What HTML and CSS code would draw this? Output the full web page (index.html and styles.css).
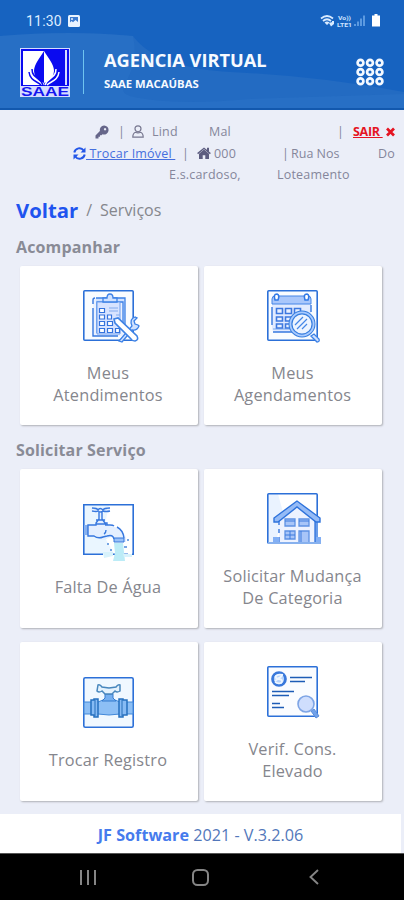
FILE: index.html
```html
<!DOCTYPE html>
<html lang="pt-BR">
<head>
<meta charset="utf-8">
<meta name="viewport" content="width=device-width, initial-scale=1">
<title>Agencia Virtual</title>
<link rel="stylesheet" href="styles.css">
</head>
<body>
<div class="screen">
  <header class="header">
    <svg class="waves" viewBox="0 0 404 108" preserveAspectRatio="none">
      <path d="M0 36Q70 30 133 36C150 60 190 70 230 72Q320 76 404 92V108H0z" fill="#236bc2"/>
      <path d="M0 36Q70 30 133 36C142 78 110 90 130 96Q170 106 250 99L404 94V108H0z" fill="#2a72c6" opacity=".6"/>
    </svg>
    <div class="status">
      <span class="clock">11:30</span>
      <svg class="photo" width="12" height="12" viewBox="0 0 12 12"><rect width="12" height="12" rx="1.5" fill="#e9f3ff"/><path d="M2 2h8v5L7.500 5 5 7.300 3.500 6 2 7.500z" fill="#3c7bd0"/><circle cx="4" cy="4" r="1" fill="#e9f3ff"/></svg>
      <svg class="signals" width="61" height="14" viewBox="0 0 61 14">
        <g fill="none" stroke="#d9ebff" stroke-width="1.700"><path d="M1 4.500q6-5 12 0M3 7q4-3.500 8 0"/></g>
        <path d="M4.500 8.500q2.500-2 5 0L7 11zM9 9l3-1v2h2l-3 2.500zM12 7h2v3h-2z" fill="#d9ebff"/>
        <text x="18" y="6" textLength="13" lengthAdjust="spacingAndGlyphs" class="volte">Vo))</text>
        <text x="17" y="13" textLength="15" lengthAdjust="spacingAndGlyphs" class="volte">LTE1</text>
        <path d="M34 10h2v2h-2zM37 7.500h2V12h-2zM40 4.500h2V12h-2zM43 1.500h2V12h-2z" fill="#5c9ae0"/>
        <path d="M54.500 0h3v1.500H60V12.500h-8V1.500h2.500z" fill="#fff"/>
      </svg>
    </div>
    <div class="brand">
      <svg class="logo" width="50" height="49" viewBox="0 0 50 49">
        <rect width="50" height="49" fill="#d5dcff"/>
        <rect x="1" y="1" width="48" height="37" fill="#0a0af0"/>
        <rect x="3" y="3" width="21" height="34" fill="#fff"/>
        <rect x="45" y="2" width="2" height="35" fill="#d5dcff"/>
        <path d="M24 3C20 10 14 16 14 23q0 8 10 12z" fill="#0a0af0"/>
        <path d="M24 3c4 7 10 13 10 20q0 8-10 12z" fill="#fff"/>
        <path d="M12 21c0 10 9 8 11 16M9 24c1 9 8 9 12 13" fill="none" stroke="#0a0af0" stroke-width="1.500"/>
        <path d="M36 21c0 10-9 8-11 16M39 24c-1 9-8 9-12 13" fill="none" stroke="#fff" stroke-width="1.500"/>
        <text x="1" y="48" textLength="48" lengthAdjust="spacingAndGlyphs" class="logo-text">SAAE</text>
      </svg>
      <div class="divider"></div>
      <div class="titles"><h1>AGENCIA VIRTUAL</h1><p>SAAE MACAÚBAS</p></div>
      <svg class="menu" width="28" height="28" viewBox="0 0 28 28" fill="none" stroke="#f4f9ff" stroke-width="2.700">
        <circle cx="4.500" cy="4.700" r="2.900"/><circle cx="14" cy="4.700" r="2.900"/><circle cx="23.500" cy="4.700" r="2.900"/>
        <circle cx="4.500" cy="14" r="2.900"/><circle cx="14" cy="14" r="2.900"/><circle cx="23.500" cy="14" r="2.900"/>
        <circle cx="4.500" cy="23.300" r="2.900"/><circle cx="14" cy="23.300" r="2.900"/><circle cx="23.500" cy="23.300" r="2.900"/>
      </svg>
    </div>
  </header>

  <section class="account">
    <div class="row row-user">
      <svg width="14" height="14" viewBox="0 0 14 14"><path fill="#66668a" fill-rule="evenodd" d="M9 .500a4.500 4.500 0 1 1-1.500 8.700L6.500 10.300H5v1.500H3.500v1.700H.500v-3L4.900 6A4.500 4.500 0 0 1 9 .500zM10 3a1.200 1.200 0 1 0 .1 0z"/></svg>
      <span class="bar">|</span>
      <svg width="12" height="13" viewBox="0 0 12 13" fill="none" stroke="#77778f" stroke-width="1.200"><circle cx="6" cy="3.800" r="3"/><path d="M3.500 7.300C1.500 8 .800 9 .800 12.200h10.400c0-3.200-.700-4.200-2.700-4.900q-2.500 1.300-5 0z"/></svg>
      <span>Lind</span><span>Mal</span><span class="bar">|</span>
      <a class="logout">SAIR&nbsp;</a>
      <svg width="11" height="10" viewBox="0 0 11 10"><path d="M2 1.500l7 7M9 1.500l-7 7" stroke="#e51422" stroke-width="2.700"/></svg>
    </div>
    <div class="row row-home">
      <svg width="13" height="13" viewBox="0 0 13 13" fill="none" stroke="#2457e8" stroke-width="2"><path d="M1.300 5.500A5.200 5.200 0 0 1 10.700 3.500M11.700 7.500A5.200 5.200 0 0 1 2.300 9.500"/><path d="M12.500.500v5h-5zM.500 12.500v-5h5z" fill="#2457e8" stroke="none"/></svg>
      <a class="swap">&nbsp;Trocar Imóvel&nbsp;</a><span class="bar">|</span>
      <svg width="14" height="12" viewBox="0 0 14 12"><path d="M7 2.600L2 6.800V12h3.700V8.300h2.600V12H12V6.800z" fill="#5d5d80"/><path d="M.600 6.600L7 1.300l6.400 5.300" fill="none" stroke="#5d5d80" stroke-width="1.400"/><path d="M10 .800h2v4h-2z" fill="#5d5d80"/></svg>
      <span>000</span><span class="bar">|</span><span class="street">Rua Nos</span><span class="street-end">Do</span>
    </div>
    <div class="row row-address"><span>E.s.cardoso,</span><span>Loteamento</span></div>
  </section>

  <main class="content">
    <nav class="crumb"><a>Voltar</a><span class="slash">/</span><span>Serviços</span></nav>
    <h2>Acompanhar</h2>
    <div class="cards">
      <article class="card">
        <svg class="icon" viewBox="0 0 51 51">
          <rect x=".800" y=".800" width="49.400" height="49.400" rx="1" class="frame"/>
          <path d="M12 8h30v38H10V10" class="soft"/><path d="M10 18v28h25M10 14v-4q0-2 2-2" class="line"/>
          <path d="M13 8h29v31H40V12H14v31" class="pale"/><path d="M14 12h23v32H14z" fill="#d7e3ff" stroke="#6d9eee"/>
          <path d="M20 12V8h4q0-4 3-4t3 4h4v4z" class="pale"/>
          <path d="M16.500 18.500h5v4h-5zM16.500 25h5v4h-5zM24.500 25h4v4h-4zM16.500 31.500h5v4h-5zM24.500 31.500h5v4h-5zM16.500 38.500h5v4h-5zM24.500 38.500h5v4h-5zM32.500 38.500h4v4h-4z" fill="#fff" stroke="#3473dd" stroke-width="1.200"/>
          <path d="M26 18h9M26 21h9M33 25h4" stroke="#83abed"/>
          <path d="M36 51l13-15q-3-7 3-9l2 1-3 3 1 3 3 1 1 1q-2 5-7 4L39 52z" class="pale"/>
          <path d="M31 29l4-1 19 18q2 4-2 5-3 0-4-2L32 33z" fill="#fff" stroke="#3d82e5" stroke-width="1.600"/>
        </svg>
        <p>Meus<br>Atendimentos</p>
      </article>
      <article class="card">
        <svg class="icon" viewBox="0 0 51 51">
          <rect x=".800" y=".800" width="49.400" height="49.400" rx="1" class="frame"/>
          <path d="M5 9q0-3 3-3h33q3 0 3 3v33H9q-4 0-4-4z" fill="#e2ebff"/>
          <path d="M5 14V9q0-3 3-3h33q3 0 3 3v5z" fill="#a9c7fb" stroke="#4585e6"/>
          <path d="M5 17v18M6 42h19M44 15v7" class="line"/><path d="M6 39h20" stroke="#77a7f0"/>
          <path d="M8 10q-2-6 2-6 3 1 1 6zM38 10q-2-6 2-6 3 1 1 6z" fill="#fff" stroke="#3179e5" stroke-width="1.600"/>
          <path d="M9.500 18.500h6v5h-6zM18.500 18.500h6v5h-6zM27.500 18.500h6v5h-6zM9.500 27h6v4h-6zM18.500 27h6v4h-6zM9.500 34h6v4h-6zM18.500 34h6v4h-6z" fill="#e8f0ff" stroke="#3d78df" stroke-width="1.600"/>
          <path d="M44 46l3-2 5 5q1 3-2 3z" class="pale"/>
          <circle cx="35" cy="34" r="11.500" fill="#edf4ff" stroke="#397fdf" stroke-width="4"/><circle cx="35" cy="34" r="11.600" fill="none" stroke="#a9cbff" stroke-width="1.800"/>
          <path d="M28 35l8-8M30 39l10-10M35 39l5-5" stroke="#4486e7" stroke-width="1.200"/>
        </svg>
        <p>Meus<br>Agendamentos</p>
      </article>
    </div>
    <h2 class="second">Solicitar Serviço</h2>
    <div class="cards">
      <article class="card">
        <svg class="icon" viewBox="0 0 51 51">
          <path d="M1 1h25L20 30 31 50H1z" fill="#eaf6ff"/>
          <path d="M20 50.200H.800V.800H50.200V50.200H49M32 50.200h-4M45 50.200h-5" class="frame-line"/>
          <path d="M16 16h3v-3h-3v-5q-4-1-8-1V4q5-1 9 0 9-1 10-1v4q-4 0-7 1v5h-2l4 6h2l2 3q14 1 17 12v4h-9q-1-7-9-4-4 4-10 0-4-3-12-1V21h10z" fill="#e4efff"/>
          <path d="M1 21h4v10H1z" fill="#87b1ef"/>
          <path d="M9 4q5 0 6 2 2-3 5 0 1-2 7-2M9 7q5 1 6 0 3 2 5 0 3 1 7 0M16 8v7l-3 4v2H5v11h6q4 3 9 1l4-1M19 8v7l3 4h2v2M13 16h9M13 20h10M5 21v11M22 21h5q3 0 4 1M34 23q6 3 7 11M21 30q2-1 2-4M24 32q6-2 7 3" class="line"/>
          <path d="M31 34h10v4H31z" fill="#99c1f8" stroke="#3577db"/>
          <path d="M31 39h9l2 18H30l2-8z" fill="#bcecf7"/>
          <path d="M20 48h10v4l-9 2zM40 50h9v3h-8z" fill="#d8f2fb"/>
          <path d="M24 40h2M44 36h2M41 43h3M27 46h2" stroke="#4d89da" stroke-width="1.500"/>
        </svg>
        <p>Falta De Água</p>
      </article>
      <article class="card">
        <svg class="icon" viewBox="0 0 51 51">
          <path d="M1 1h10l6 22L8 50H1z" fill="#eaf3ff"/>
          <rect x=".800" y=".800" width="49.400" height="49.400" rx="1" class="frame-line"/>
          <path d="M12 25l18-14 17 14v25H12z" fill="#edf2ff"/><path d="M48 27h3v23h-3z" fill="#699ce9"/>
          <path d="M12 26v6M12 36v4M12 44v6M48 26v24" class="line"/>
          <path d="M30 8L7 25v4h4l19-15 19 15h4v-4z" fill="#95bbf6" stroke="#2e73dc" stroke-width="1.400"/>
          <path d="M18 26h10v7H18zM32 26h10v7H32zM18 38h10v8H18zM32 38h10v12H32z" fill="#a8c5f8" stroke="#5d91e4" stroke-width="1.300"/>
          <path d="M18 28h10M32 28h10M23 38v8M18 42h10M34 50V38" stroke="#3c7add"/>
          <path d="M6 44h6v6H6zM49 44h5v6h-5z" fill="#82aff5"/><path d="M1 50h53" stroke="#87b1ee" stroke-width="2"/>
        </svg>
        <p>Solicitar Mudança<br>De Categoria</p>
      </article>
      <article class="card">
        <svg class="icon" viewBox="0 0 51 51">
          <rect x=".800" y=".800" width="49.400" height="49.400" rx="1.500" fill="#f0f8ff" stroke="#2c70d8" stroke-width="1.600"/>
          <path d="M1 25h14l5-2q6-5 12 0l5 2h13v12H37q-11 2-22 0H1z" fill="#8dbff5" stroke="#4389d9"/>
          <path d="M8 23h3v-1h4v18h-4v-2H8zM36 22h4v1h4v15h-4v2h-4z" fill="#87bbf4" stroke="#2670bf" stroke-width="1.500"/>
          <path d="M12 23v16M39 23v16" stroke="#276eba"/>
          <path d="M22 17h8v4l3 3H19l3-3z" fill="#75aff0" stroke="#347bce"/>
          <path d="M15 8q2-1 4 2l7 1 7-1q2-3 4-2v6q-3 2-5 0l-3 3h-7l-3-3q-3 2-5 0z" fill="#e4f2fd" stroke="#4887bd" stroke-width="1.500"/>
        </svg>
        <p>Trocar Registro</p>
      </article>
      <article class="card">
        <svg class="icon" viewBox="0 0 51 51">
          <rect x=".800" y=".800" width="49.400" height="49.400" rx="1" fill="#fafcff" stroke="#2c70d8" stroke-width="1.600"/>
          <circle cx="12" cy="13" r="6.500" fill="#b5d2fb" stroke="#3978db" stroke-width="2.700"/>
          <path d="M16 9q-5-1-7 1t3 3 2 4q-3 1-6-1M8 15l7-5" fill="none" stroke="#eef6ff" stroke-width="1.800"/>
          <path d="M23 11.500h22M23 15.500h15M5 25.500h22M5 29.500h17M5 37.500h8M5 41.500h12" stroke="#1d5cb6" stroke-width="1.700"/>
          <path d="M44 45l3-2 5 7-3 2z" fill="#72a2e9" stroke="#5a8edc"/>
          <circle cx="39" cy="38" r="8" fill="#cfdefd" stroke="#7ea5e5" stroke-width="1.600"/>
        </svg>
        <p>Verif. Cons.<br>Elevado</p>
      </article>
    </div>
  </main>

  <footer class="footer"><b>JF Software</b>&nbsp;2021 - V.3.2.06</footer>
  <nav class="system">
    <svg width="16" height="15" viewBox="0 0 16 15"><path d="M1 0v15M8 0v15M15 0v15" stroke="#858585" stroke-width="2"/></svg>
    <svg width="17" height="17" viewBox="0 0 17 17"><rect x="1" y="1" width="15" height="15" rx="4.500" fill="none" stroke="#858585" stroke-width="2"/></svg>
    <svg width="10" height="16" viewBox="0 0 10 16"><path d="M9 1L1.500 8 9 15" fill="none" stroke="#858585" stroke-width="1.900"/></svg>
  </nav>
</div>
</body>
</html>
```
FILE: styles.css
```css
* { box-sizing: border-box; }
body { margin: 0; font-family: "Open Sans", "Noto Sans", sans-serif; color: #85868d; }
h1, h2, p { margin: 0; }
svg { display: block; flex: none; overflow: visible; }
.screen { width: 404px; height: 900px; display: flex; flex-direction: column; background: #ebeef8; overflow: hidden; }

.header { position: relative; z-index: 0; height: 110px; flex: none; color: #f6faff; border-bottom: 2px solid #1258ae; background: #1763c0; }
.waves { position: absolute; inset: 0; z-index: -1; width: 100%; height: 100%; overflow: hidden; }
.status { display: flex; align-items: center; height: 42px; padding: 0 23px 0 26px; }
.clock { font: 14px/16px Roboto, sans-serif; width: 42px; letter-spacing: .2px; color: #deedff; }
.signals { margin-left: auto; }
.volte { font: bold 6px Roboto, sans-serif; fill: #cfe4ff; }
.brand { display: flex; padding: 6px 20px 0; }
.logo-text { font: bold 13px "Liberation Sans", sans-serif; fill: #1515ef; }
.divider { width: 1px; height: 44px; margin: 2px 20px 0 13px; background: #6fc4ef; }
.titles { flex: 1; }
.titles h1 { font-size: 18.200px; line-height: 24px; font-weight: 700; white-space: nowrap; }
.titles p { font-size: 11.300px; line-height: 16px; font-weight: 700; margin-top: 4px; }
.menu { margin: 10px 0 0; }

.account { height: 84px; flex: none; padding: 11px 0 0; font-size: 12.500px; letter-spacing: .2px; color: #85869b; }
.row { display: grid; align-items: center; height: 21.500px; line-height: 21px; white-space: nowrap; }
.row-user { margin-left: 95px; grid-template-columns: 24px 13px 20px 57px 129px 15px 32px 12px; }
.row-home { margin-left: 73px; grid-template-columns: 13px 97px 14px 17px 69px 8px 56px 48px; }
.row-address { margin-left: 169px; grid-template-columns: 108px auto; }
.bar { margin-left: -1px; }
.logout { color: #e51422; font-weight: 700; letter-spacing: -.3px; text-decoration: underline; }
.swap { color: #466fde; text-decoration: underline; }
.street { letter-spacing: 0; }
.street-end { text-align: right; }

.content { flex: 1; padding: 0 22px 0 20px; }
.crumb { display: flex; align-items: center; height: 32px; margin-left: -4px; font-size: 16px; }
.crumb a { font-size: 20.300px; font-weight: 700; color: #1f54ef; }
.slash { margin: 0 8px; }
h2 { height: 40px; margin-left: -4px; font-size: 16px; letter-spacing: .15px; line-height: 42px; font-weight: 700; color: #898b96; }
h2.second { height: 44px; line-height: 50px; }
.cards { display: grid; grid-template-columns: 178px 178px; grid-auto-rows: 159px; gap: 14px 6px; }
.card {
  display: flex; flex-direction: column; align-items: center; justify-content: center;
  padding: 6px 1px 0 0; background: #fff; border-radius: 2px; box-shadow: 1px 1px 2px #aeb0b6;
}
.card:nth-child(odd) { padding-right: 2px; }
.icon { width: 51px; height: 51px; }
.card p { margin: 22px 0 1px; font-size: 16.300px; letter-spacing: .2px; line-height: 21.500px; text-align: center; white-space: nowrap; }
.frame { fill: #f9fcff; stroke: #2c70d8; stroke-width: 1.600; }
.frame-line { fill: none; stroke: #2c70d8; stroke-width: 1.600; }
.soft { fill: #eaf1ff; }
.line { fill: none; stroke: #3778df; stroke-width: 1.400; }
.pale { fill: #cfe1ff; stroke: #3b80e6; stroke-width: 1.300; }

.footer { height: 39px; flex: none; display: flex; align-items: center; justify-content: center; width: 401px; padding-top: 2px; background: #fff; font-size: 16.200px; color: #5277ba; }
.footer b { color: #467bed; }
.system { height: 47px; flex: none; display: grid; grid-template-columns: 112px 116.500px auto; align-items: center; padding-left: 80px; background: #000; border-top: 1px solid #555; }
```
